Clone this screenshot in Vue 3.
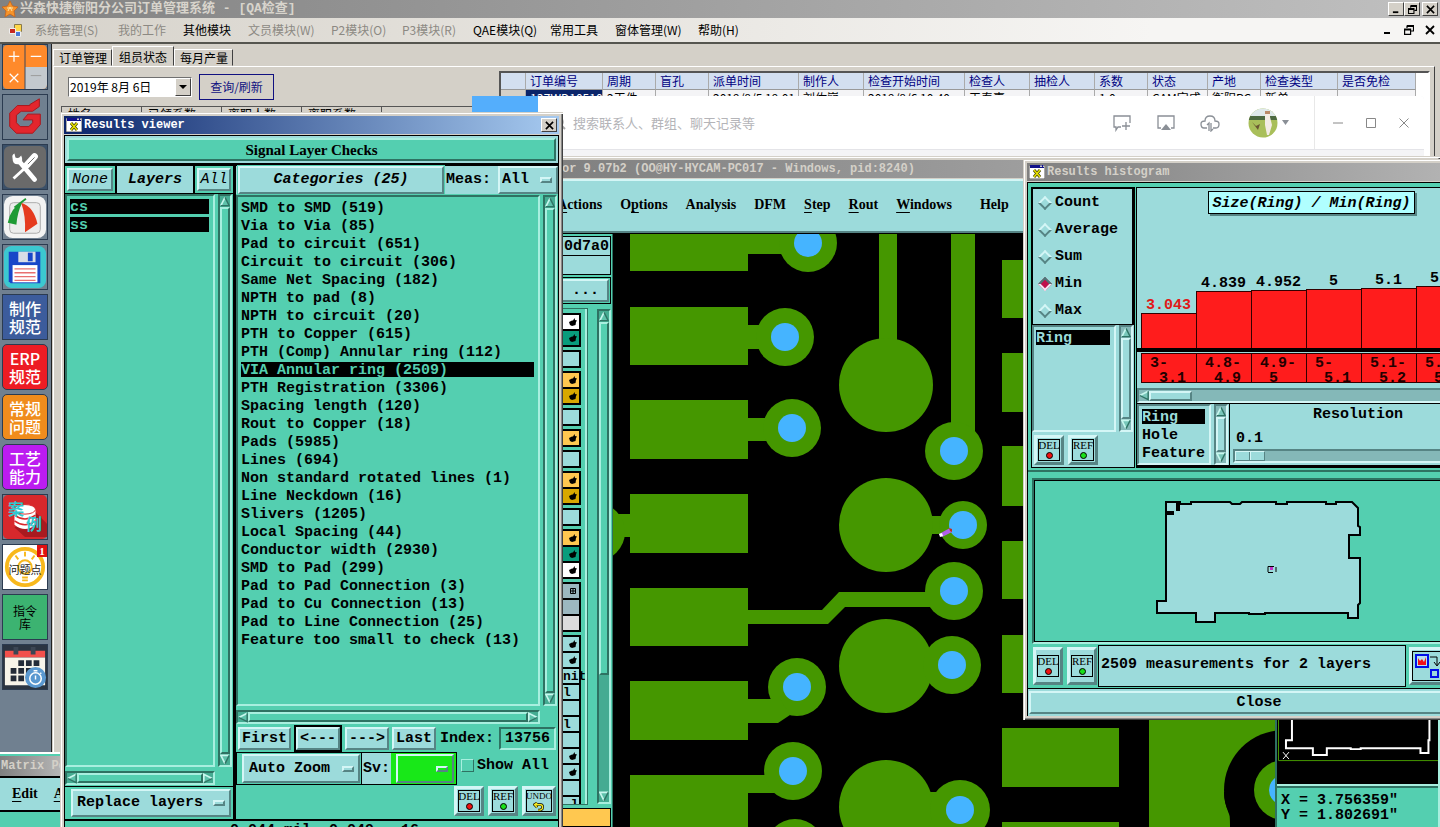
<script setup>
import { ref } from 'vue'

const menus = [
  { t: '系统管理(S)', off: true }, { t: '我的工作', off: true }, { t: '其他模块' },
  { t: '文员模块(W)', off: true }, { t: 'P2模块(O)', off: true }, { t: 'P3模块(R)', off: true },
  { t: 'QAE模块(Q)' }, { t: '常用工具' }, { t: '窗体管理(W)' }, { t: '帮助(H)' },
]
const cellWidth = (s) => [...s].reduce((w, c) => w + (c.charCodeAt(0) > 255 ? 12 : 6), 0) + 'px'

const orderCols = [
  { t: '', w: 25, v: '' }, { t: '订单编号', w: 77, v: '13ZWD10510' }, { t: '周期', w: 53, v: '2工件' },
  { t: '盲孔', w: 53, v: '' }, { t: '派单时间', w: 90, v: '2019/8/5 19:01' }, { t: '制作人', w: 65, v: '刘佐嶷' },
  { t: '检查开始时间', w: 101, v: '2019/8/6 10:40' }, { t: '检查人', w: 65, v: '王春喜' }, { t: '抽检人', w: 65, v: '' },
  { t: '系数', w: 53, v: '1.0' }, { t: '状态', w: 60, v: 'CAM完成' }, { t: '产地', w: 53, v: '衡阳PC' },
  { t: '检查类型', w: 77, v: '新单' }, { t: '是否免检', w: 78, v: '' },
]
const staffCols = ['姓名', '已领系数', '离职人数', '离职系数']

const categories = [
  'SMD to SMD (519)', 'Via to Via (85)', 'Pad to circuit (651)', 'Circuit to circuit (306)',
  'Same Net Spacing (182)', 'NPTH to pad (8)', 'NPTH to circuit (20)', 'PTH to Copper (615)',
  'PTH (Comp) Annular ring (112)', 'VIA Annular ring (2509)', 'PTH Registration (3306)',
  'Spacing length (120)', 'Rout to Copper (18)', 'Pads (5985)', 'Lines (694)',
  'Non standard rotated lines (1)', 'Line Neckdown (16)', 'Slivers (1205)', 'Local Spacing (44)',
  'Conductor width (2930)', 'SMD to Pad (299)', 'Pad to Pad Connection (3)',
  'Pad to Cu Connection (13)', 'Pad to Line Connection (25)', 'Feature too small to check (13)',
]
const selected = ref(9)
const index = ref('13756')
const showAll = ref(false)
const status = '0.044 mil  0.049   16'

const stats = ['Count', 'Average', 'Sum', 'Min', 'Max']
const stat = ref('Min')
const bars = [
  { v: '3.043', h: 35, a: '3-', b: '3.1', hot: true }, { v: '4.839', h: 57, a: '4.8-', b: '4.9' },
  { v: '4.952', h: 58, a: '4.9-', b: '5' }, { v: '5', h: 59, a: '5-', b: '5.1' },
  { v: '5.1', h: 60, a: '5.1-', b: '5.2' }, { v: '5.2', h: 62, a: '5.2-', b: '5.3' },
]
const resolution = ref(0)

const layerGroups = [
  [{ c: 'white', k: 1 }, { c: 'green', k: 1 }], [{ c: '' }], [{ c: 'orange', k: 1 }, { c: 'gold', k: 1 }], [{ c: '' }],
  [{ c: 'orange', k: 1 }], [{ c: '' }], [{ c: 'orange', k: 1 }, { c: 'gold', k: 1 }], [{ c: '' }],
  [{ c: 'orange', k: 1 }, { c: 'green', k: 1 }, { c: 'white', k: 1 }],
  [{ c: 'slate', k: 2 }, { c: 'slate' }, { c: 'pale' }],
  [{ c: '', k: 1 }, { c: '', k: 1 }, { c: '', t: 'nit' }, { c: '', t: 'l' }, { c: '' }, { c: '', t: 'l' }, { c: '' },
    { c: '', k: 1 }, { c: '', k: 1 }, { c: '' }, { c: '', t: ' l' }],
]

const pads = [
  [630, 234, 118, 37], [630, 307, 118, 58], [630, 400, 118, 59], [630, 494, 118, 59], [630, 588, 118, 58],
  [630, 681, 118, 59], [630, 775, 118, 52], [1002, 260, 60, 58], [1002, 353, 60, 59], [1002, 446, 60, 60],
  [1002, 541, 60, 58], [1002, 635, 60, 58], [1002, 728, 117, 59], [1002, 822, 117, 5],
  [748, 234, 50, 20], [748, 325, 20, 24], [748, 418, 22, 23], [748, 775, 30, 18], [613, 514, 17, 23],
  [879, 234, 18, 120], [951, 234, 24, 200], [928, 516, 20, 18], [925, 792, 20, 35],
]
const discs = [
  [886, 385, 47], [886, 525, 47], [886, 666, 47], [886, 807, 47], [808, 243, 29], [785, 337, 29], [792, 428, 29],
  [954, 451, 29], [963, 525, 24], [954, 591, 29], [952, 665, 29], [960, 810, 30], [797, 687, 29], [793, 771, 29],
  [795, 848, 29], [596, 532, 29],
]
const holes = [
  [808, 243], [785, 337], [792, 428], [954, 451], [963, 525], [954, 591], [952, 665], [960, 810], [797, 687], [793, 771],
]
</script>

<template>
  <div class="desktop">
    <svg class="defs" aria-hidden="true">
      <symbol id="up" viewBox="0 0 12 12"><path d="M6 1 L1 11 H11Z" fill="#6fd0bb" fill-opacity=".6" /><path d="M1 11 L6 1" stroke="#c8f7ee" stroke-width="2" fill="none" /><path d="M6 1 L11 11 H1" stroke="#2f7364" stroke-width="1.6" fill="none" /></symbol>
      <symbol id="down" viewBox="0 0 12 12"><path d="M1 1 H11 L6 11Z" fill="#6fd0bb" fill-opacity=".6" /><path d="M11 1 H1 L6 11" stroke="#c8f7ee" stroke-width="2" fill="none" /><path d="M11 1 L6 11" stroke="#2f7364" stroke-width="1.6" fill="none" /></symbol>
      <symbol id="left" viewBox="0 0 12 12"><path d="M1 6 L11 1 V11Z" fill="#6fd0bb" fill-opacity=".6" /><path d="M1 6 L11 1" stroke="#c8f7ee" stroke-width="2" fill="none" /><path d="M11 1 V11 L1 6" stroke="#2f7364" stroke-width="1.6" fill="none" /></symbol>
      <symbol id="right" viewBox="0 0 12 12"><path d="M11 6 L1 1 V11Z" fill="#6fd0bb" fill-opacity=".6" /><path d="M1 11 V1 L11 6" stroke="#c8f7ee" stroke-width="2" fill="none" /><path d="M11 6 L1 11" stroke="#2f7364" stroke-width="1.6" fill="none" /></symbol>
      <symbol id="xwin" viewBox="0 0 16 14"><path d="M0 0H16V14H0Z" fill="#fff" stroke="#555" /><path d="M1 0H15V3H1Z" fill="#10108a" /><path d="M11 0.500H13V2H11ZM14 .5H15V2H14Z" fill="#ccc" /><path d="M5 5 L11 12 M11 5 L5 12" stroke="#444400" stroke-width="3" /><path d="M5 5 L11 12 M11 5 L5 12" stroke="#e8e000" stroke-width="1.500" /></symbol>
      <symbol id="hand" viewBox="0 0 8 8"><path d="M0 4 L3 2.500 L4 2.500 L5.500 0 L6 2 L8 2.500 L7 4 L6.500 7 L3 8 L1 7Z" fill="#000" /></symbol>
      <symbol id="close" viewBox="0 0 10 10"><path d="M1 1 L9 9 M9 1 L1 9" stroke="#000" stroke-width="1.800" /></symbol>
      <symbol id="restore" viewBox="0 0 10 10"><path d="M3 .5 H9.500 V6 H7 M3 3 V.5 M3 1.500 H9.500" fill="none" stroke="#000" stroke-width="1.200" /><path d="M.6 4 H6.600 V9.400 H.6Z M.6 5 H6.600" fill="none" stroke="#000" stroke-width="1.200" /></symbol>
      <symbol id="min" viewBox="0 0 10 10"><path d="M1 8 H7" stroke="#000" stroke-width="2" /></symbol>
    </svg>

    <!-- Order management -->
    <section class="erp">
      <header class="erp-title">
        <svg class="star" viewBox="0 0 16 16"><path d="M8 0 L10.500 5 L16 6 L12 10 L13 16 L8 13 L3 16 L4 10 L0 6 L5.500 5Z" fill="#f7942a" stroke="#c9641a" stroke-width=".8" /><path d="M5 7 H11 M6 10 L8 6 L10 10" stroke="#fde3a4" fill="none" /></svg>
        <h1>兴森快捷衡阳分公司订单管理系统 - [QA检查]</h1>
        <button class="cap" aria-label="Minimize"><svg><use href="#min" /></svg></button>
        <button class="cap" aria-label="Restore"><svg><use href="#restore" /></svg></button>
        <button class="cap last" aria-label="Close"><svg><use href="#close" /></svg></button>
      </header>
      <nav class="erp-menu">
        <svg class="form-ico" viewBox="0 0 14 13"><path d="M5.500.500H12.500V7.500H5.500Z" fill="#ffd84a" stroke="#8a7a4a" /><path d="M.5 4.500H6.500V9.500H.5Z" fill="#c8281e" stroke="#eee" /><path d="M6.500 7.500H11.500V12.500H6.500Z" fill="#4a78d8" stroke="#eee" /></svg>
        <button v-for="m in menus" :key="m.t" :class="{ off: m.off }" :style="{ width: cellWidth(m.t) }">{{ m.t }}</button>
        <span class="grow"></span>
        <button class="mdi" aria-label="Minimize child"><svg><use href="#min" /></svg></button>
        <button class="mdi" aria-label="Restore child"><svg><use href="#restore" /></svg></button>
        <button class="mdi" aria-label="Close child"><svg><use href="#close" /></svg></button>
      </nav>
      <div class="erp-body">
        <aside class="side">
          <button class="tile calc" aria-label="Calculator"><svg viewBox="0 0 46 46"><path d="M0 5Q0 0 5 0H41Q46 0 46 5V41Q46 46 41 46H5Q0 46 0 41Z" fill="#ff8a2b" /><path d="M23 23H46V41Q46 46 41 46H23Z" fill="#c3c9ce" /><path d="M23 0V46" stroke="#34465c" /><path d="M6 12H17M11.500 6.500V17.500M29 12H40M7 30L16 39M16 30L7 39" stroke="#fff" stroke-width="1.300" /><path d="M29 32H40" stroke="#999" /></svg></button>
          <button class="tile flat" aria-label="Genesis"><svg viewBox="0 0 46 46"><path d="M28 10L38 4V12L31 17H19L14 21V29L18 33H27L31 29V26H21L26 20H39V31L31 40H14L7 33V19L15 11H28Z" fill="#e3262d" stroke="#a9161c" /></svg></button>
          <button class="tile dark" aria-label="Tools"><svg viewBox="0 0 46 46"><path d="M1 8Q1 1 8 1H38Q45 1 45 8V38Q45 45 38 45H8Q1 45 1 38Z" fill="#6a6a6a" /><path d="M16 16L33 36" stroke="#fff" stroke-width="5" stroke-linecap="round" /><path d="M10 14Q10 21 17 20Q22 17 19 11L16 14L13 13L12 9Q9 10 10 14Z" fill="#fff" /><path d="M11 35L23 24" stroke="#fff" stroke-width="3" /><path d="M25 21L33 12" stroke="#fff" stroke-width="7" stroke-linecap="round" /><path d="M26 20L33 13" stroke="#6a6a6a" /></svg></button>
          <button class="tile flat" aria-label="Umbrella"><svg viewBox="0 0 46 46"><rect x="1" y="1" width="44" height="44" rx="9" fill="#f3f3f3" /><rect x="7" y="8" width="32" height="32" rx="4" fill="#ececec" stroke="#aaa" /><path d="M20 8Q8 13 5 29L14 31Q15 18 20 8Z" fill="#1e9a34" /><path d="M19 8Q32 12 36 30L23 39Q24 22 19 8Z" fill="#e53a1e" /><path d="M12 13L24 4" stroke="#1e9a34" stroke-width="2" /></svg></button>
          <button class="tile flat" aria-label="Save"><svg viewBox="0 0 46 46"><rect x="1" y="1" width="44" height="44" rx="8" fill="#3cc8d0" /><path d="M6 7H39V40H8L6 38Z" fill="#1846c8" /><path d="M16 7H34V18H16Z" fill="#d8dde6" /><path d="M26 8H31V17H26Z" fill="#1846c8" /><path d="M10 21H36V39H10Z" fill="#fff" /><path d="M12 25H34M12 29H34M12 33H34M12 37H34" stroke="#e87070" stroke-width="1.400" /></svg></button>
          <button class="tile text blue">制作<br>规范</button>
          <button class="tile text red">ERP<br>规范</button>
          <button class="tile text amber">常规<br>问题</button>
          <button class="tile text violet">工艺<br>能力</button>
          <button class="tile case" aria-label="案例">
            <svg viewBox="0 0 46 46"><rect width="46" height="46" rx="5" fill="#d8282c" /><path d="M12 34L23 44H46V30L34 18Z" fill="#a81a20" /><path d="M12 15V31Q23 40 34 31V15Z" fill="#fff" /><ellipse cx="23" cy="15" rx="11" ry="5" fill="#fff" stroke="#d8282c" /><path d="M12 21Q23 29 34 21M12 27Q23 35 34 27" stroke="#d8282c" stroke-width="1.500" fill="none" /></svg>
            <span>案</span><span class="b">例</span>
          </button>
          <button class="tile bulb">
            <svg viewBox="0 0 46 46"><rect width="46" height="46" fill="#fff" /><circle cx="23" cy="23" r="19" fill="none" stroke="#f8b81c" stroke-width="4" /><path d="M23 7V12M13 11L16 15M33 11L30 15M20 34H26M20 37H26" stroke="#f8b81c" stroke-width="2" /><circle cx="23" cy="23" r="7" fill="none" stroke="#f8b81c" stroke-width="2" /></svg>
            <span>问题点</span><b>1</b>
          </button>
          <button class="tile lib">指令<br>库</button>
          <button class="tile flat" aria-label="Calendar"><svg viewBox="0 0 46 46"><rect width="46" height="46" fill="#2b3542" /><path d="M2 6H44V13H2Z" fill="#f2504c" /><path d="M2 13H44V42H2Z" fill="#f7f4ea" /><path d="M11 2H16V10H11ZM29 2H34V10H29Z" fill="#3b4654" /><path d="M16 16H22V22H16ZM24 16H30V22H24ZM32 16H38V22H32ZM8 24H14V30H8ZM16 24H22V30H16ZM24 24H30V30H24ZM8 32H14V38H8ZM16 32H22V38H16Z" fill="#232b38" /><circle cx="34" cy="34" r="11" fill="#5a98d0" /><circle cx="34" cy="35" r="6" fill="none" stroke="#fff" stroke-width="1.600" /><path d="M34 32V36M32 27H36M39 29L40 30" stroke="#fff" stroke-width="1.500" /></svg></button>
        </aside>
        <div class="erp-main">
          <div class="tabs" role="tablist">
            <button role="tab">订单管理</button><button role="tab" class="on">组员状态</button><button role="tab">每月产量</button>
          </div>
          <div class="page">
            <div class="filters">
              <div class="query">
                <span class="date"><input aria-label="日期" value="2019年 8月 6日"><button aria-label="打开日历"><svg viewBox="0 0 8 4"><path d="M0 0H8L4 4Z" /></svg></button></span>
                <button class="refresh">查询/刷新</button>
              </div>
              <div class="staff"><span v-for="c in staffCols" :key="c">{{ c }}</span></div>
            </div>
            <div class="orders">
              <table>
                <colgroup><col v-for="c in orderCols" :key="c.t" :style="{ width: c.w + 'px' }"></colgroup>
                <thead><tr><th v-for="c in orderCols" :key="c.t">{{ c.t }}</th></tr></thead>
                <tbody><tr><td v-for="(c, i) in orderCols" :key="c.t" :class="{ cur: i === 1, head: i === 0 }">{{ i ? c.v : '▸' }}</td></tr></tbody>
              </table>
            </div>
          </div>
        </div>
      </div>
    </section>

    <!-- Messenger -->
    <section class="im">
      <div class="im-bar">
        <span class="im-blue"></span>
        <svg class="lens" viewBox="0 0 14 14"><circle cx="6" cy="6" r="5" fill="none" stroke="#aaa" stroke-width="1.500" /><path d="M9.500 9.500L13 13" stroke="#aaa" stroke-width="2" /></svg>
        <input aria-label="搜索" placeholder="搜索联系人、群组、聊天记录等">
        <button class="im-ico" aria-label="New chat"><svg viewBox="0 0 20 18"><path d="M9 13H6L4 16V13H2V2H18V9" fill="none" stroke="#8a8f96" stroke-width="1.300" /><path d="M14 8V16M10 12H18" stroke="#8a8f96" stroke-width="1.300" /></svg></button>
        <button class="im-ico" aria-label="Share screen"><svg viewBox="0 0 20 18"><path d="M5 14H2V2H18V14H15" fill="none" stroke="#8a8f96" stroke-width="1.300" /><path d="M10 10L15 16H5Z" fill="#8a8f96" /></svg></button>
        <button class="im-ico" aria-label="Cloud"><svg viewBox="0 0 20 18"><path d="M7 14H4Q1 14 1 10Q1 7 5 7Q5 2 10 2Q15 2 15 7Q19 7 19 10Q19 14 16 14H13" fill="none" stroke="#8a8f96" stroke-width="1.300" /><path d="M9 17V9L7 11M11 9V17L13 15" fill="none" stroke="#8a8f96" stroke-width="1.300" /></svg></button>
        <button class="avatar" aria-label="Account"><svg viewBox="0 0 30 30"><clipPath id="av"><circle cx="15" cy="15" r="14.500" /></clipPath><g clip-path="url(#av)"><path d="M0 0H30V30H0Z" fill="#a9bf5a" /><path d="M0 0H30V8H0Z" fill="#dfe9ea" /><path d="M0 8H30V12H0Z" fill="#4d6a40" /><path d="M17 5H22V9L24 17L21 27H19L17 17Z" fill="#f3ece4" /><path d="M17 3H22V6H17Z" fill="#b98a68" /><path d="M4 14L8 18L12 16L10 22Z" fill="#6a5632" /></g></svg></button>
        <svg class="caret" viewBox="0 0 8 5"><path d="M0 0H7L3.500 5Z" fill="#8a8f96" /></svg>
        <div class="im-win">
          <button aria-label="Minimize"><svg viewBox="0 0 12 12"><path d="M1 6H11" stroke="#888" /></svg></button>
          <button aria-label="Maximize"><svg viewBox="0 0 12 12"><path d="M1.500 1.500H10.500V10.500H1.500Z" fill="none" stroke="#888" /></svg></button>
          <button aria-label="Close"><svg viewBox="0 0 12 12"><path d="M1.500 1.500L10.500 10.500M10.500 1.500L1.500 10.500" stroke="#888" /></svg></button>
        </div>
      </div>
    </section>

    <!-- Graphic editor -->
    <section class="win editor">
      <header class="bar idle"><h2>or 9.07b2 (OO@HY-HYCAM-PC017 - Windows, pid:8240)</h2></header>
      <nav class="motif-menu">
        <button><u>A</u>ctions</button><button>O<u>p</u>tions</button><button>Analysis</button><button>DFM</button>
        <button><u>S</u>tep</button><button><u>R</u>out</button><button><u>W</u>indows</button><button class="help">Help</button>
      </nav>
      <div class="editor-body">
        <div class="strip">
          <div class="field">0d7a0</div>
          <div class="field"></div>
          <div class="dots"><button class="bev">...</button></div>
          <div class="layers">
            <div class="layer-list">
              <div v-for="(g, i) in layerGroups" :key="i" class="group">
                <div v-for="(c, j) in g" :key="j" class="cell" :class="c.c">
                  <svg v-if="c.k === 1" viewBox="0 0 8 8"><use href="#hand" /></svg>
                  <svg v-else-if="c.k === 2" viewBox="0 0 8 8"><path d="M1.500 1.500H6.500V6.500H1.500ZM4 1.500V6.500M1.500 4H6.500" fill="none" stroke="#000" /></svg>
                  <span v-else>{{ c.t }}</span>
                </div>
              </div>
            </div>
            <div class="vs part"><svg><use href="#up" /></svg><i></i><s></s><svg><use href="#down" /></svg></div>
          </div>
          <div class="field foot"></div>
        </div>
        <svg class="board" viewBox="613 234 662 593" preserveAspectRatio="xMinYMin slice">
          <g fill="#459700">
            <rect v-for="(p, i) in pads" :key="i" :x="p[0]" :y="p[1]" :width="p[2]" :height="p[3]" />
            <circle v-for="(d, i) in discs" :key="i" :cx="d[0]" :cy="d[1]" :r="d[2]" />
            <path d="M748 610H822L839 592H935V607H845L828 624H748Z" />
            <path d="M748 699H780L790 715L778 723H748Z" />
            <path d="M1149 700H1275V827H1149Z" />
          </g>
          <path d="M1224 792Q1224 804 1229 812Q1231 820 1229 850H1284V792Z" fill="#000" />
          <circle cx="1284" cy="790" r="60" fill="#000" />
          <circle cx="1284" cy="790" r="30" fill="#459700" />
          <circle cx="1284" cy="790" r="15" fill="#45b4ff" />
          <circle v-for="(d, i) in holes" :key="i" :cx="d[0]" :cy="d[1]" r="14" fill="#45b4ff" />
          <path d="M939 534L950 528L952 532L942 537Z" fill="#b060e8" />
          <path d="M939 534L942 533L943 536L940 537Z" fill="#fff" />
          <path d="M949 528L952 529V532L950 531Z" fill="#c03020" />
        </svg>
        <div class="overview">
          <svg viewBox="0 0 162 552" preserveAspectRatio="xMinYMax slice">
            <rect width="162" height="552" fill="#000" />
            <path d="M1.500 300V528.500H162" stroke="#459700" fill="none" />
            <path d="M15 400V508H9V516H36V523H50V516H74V517H84V516H144V521H152V508H153V400" stroke="#fff" stroke-width="2" fill="none" />
            <path d="M6 520L12 527M12 520L6 527" stroke="#fff" />
          </svg>
          <p>X = 3.756359"<br>Y = 1.802691"</p>
        </div>
      </div>
    </section>

    <!-- Matrix -->
    <section class="win matrix">
      <header class="bar idle"><h2>Matrix Po</h2></header>
      <nav class="motif-menu"><button><u>E</u>dit</button><button><u>A</u>ctions</button></nav>
    </section>

    <!-- Results viewer -->
    <section class="win results">
      <header class="bar"><svg class="xw"><use href="#xwin" /></svg><h2>Results viewer</h2><button class="cap" aria-label="Close"><svg><use href="#close" /></svg></button></header>
      <div class="rv">
        <div class="banner"><button class="bev green">Signal Layer Checks</button></div>
        <div class="cols">
          <div class="col">
            <div class="lhead">
              <div class="gcell"><button class="bev it">None</button></div>
              <div class="ltitle">Layers</div>
              <div class="gcell"><button class="bev it">All</button></div>
            </div>
            <div class="scroller">
              <ul class="list dense"><li class="sel">cs</li><li class="sel">ss</li></ul>
              <div class="vs"><svg><use href="#up" /></svg><i></i><svg><use href="#down" /></svg></div>
              <div class="hs"><svg><use href="#left" /></svg><i></i><svg><use href="#right" /></svg></div>
            </div>
            <div class="replace"><span class="opt bev"><select aria-label="Layer mode"><option>Replace layers</option></select><i></i></span></div>
          </div>
          <div class="col">
            <div class="chead">
              <button class="bev cat">Categories (25)</button>
              <label for="meas">Meas:</label>
              <span class="opt bev"><select id="meas"><option>All</option></select><i></i></span>
            </div>
            <div class="scroller">
              <ul class="list">
                <li v-for="(c, i) in categories" :key="c" :class="{ sel: i === selected }" @click="selected = i">{{ c }}</li>
              </ul>
              <div class="vs"><svg><use href="#up" /></svg><i></i><svg><use href="#down" /></svg></div>
              <div class="hs"><svg><use href="#left" /></svg><i></i><svg><use href="#right" /></svg></div>
            </div>
            <div class="navrow">
              <button class="bev">First</button><button class="bev prev">&lt;---</button><button class="bev">---&gt;</button><button class="bev">Last</button>
              <label for="idx">Index:</label><input id="idx" v-model="index">
            </div>
            <div class="zoomrow">
              <div class="zoombox">
                <span class="opt bev"><select aria-label="Zoom mode"><option>Auto Zoom</option></select><i></i></span>
                <label for="sv">Sv:</label>
                <div class="svcell"><span class="opt bev lime"><select id="sv"><option></option></select><i></i></span></div>
              </div>
              <label class="chk"><input v-model="showAll" type="checkbox">Show All</label>
            </div>
            <div class="acts">
              <button class="bev act"><span>DEL<em class="r"></em></span></button>
              <button class="bev act"><span>REF<em></em></span></button>
              <button class="bev act wide"><span>UNDO<svg viewBox="0 0 12 10"><path d="M4 1L1 3L4 6M1 3H8Q10 3 10 6Q10 9 5 9" fill="none" stroke="#000" stroke-width="3" /><path d="M4 1L1 3L4 6M1 3H8Q10 3 10 6Q10 9 5 9" fill="none" stroke="#f4e820" stroke-width="1.500" /></svg></span></button>
            </div>
          </div>
        </div>
        <p class="status">{{ status }}</p>
      </div>
    </section>

    <!-- Results histogram -->
    <section class="win histo">
      <header class="bar idle"><svg class="xw"><use href="#xwin" /></svg><h2>Results histogram</h2></header>
      <div class="hw">
        <div class="htop">
          <div class="hleft">
            <div class="radios">
              <label v-for="s in stats" :key="s"><input v-model="stat" type="radio" name="stat" :value="s">{{ s }}</label>
            </div>
            <div class="scroller aqua">
              <ul class="list dense"><li class="sel">Ring</li></ul>
              <div class="vs"><svg><use href="#up" /></svg><i></i><svg><use href="#down" /></svg></div>
            </div>
            <div class="acts">
              <button class="bev act"><span>DEL<em class="r"></em></span></button>
              <button class="bev act"><span>REF<em></em></span></button>
            </div>
          </div>
          <div class="hright">
            <div class="chart">
              <h3>Size(Ring) / Min(Ring)</h3>
              <div class="bars">
                <div v-for="b in bars" :key="b.v" class="bcol" :class="{ hot: b.hot }"><span>{{ b.v }}</span><div :style="{ height: b.h + 'px' }"></div></div>
              </div>
              <div class="bins"><div v-for="b in bars" :key="b.v">{{ b.a }}<br><span>{{ b.b }}</span></div></div>
            </div>
            <div class="hs aqua short"><svg><use href="#left" /></svg><i></i><s></s></div>
            <div class="hlow">
              <div class="scroller aqua">
                <ul class="list"><li class="sel">Ring</li><li>Hole</li><li>Feature</li></ul>
                <div class="vs"><svg><use href="#up" /></svg><i></i><svg><use href="#down" /></svg></div>
              </div>
              <div class="reso">
                <label for="reso">Resolution</label>
                <output for="reso">0.1</output>
                <input id="reso" v-model="resolution" type="range" min="0" max="100">
              </div>
            </div>
          </div>
        </div>
        <div class="map">
          <svg viewBox="1035 480 440 160" preserveAspectRatio="xMinYMin slice">
            <path d="M1166 501H1180V503H1191V501H1230L1232 503H1240L1242 501H1276V503H1287V501H1326V503H1336V501H1352L1358 507V525L1360 526V534H1349V557H1360V602L1358 604V617H1348V612H1265V613H1249V612H1215V621H1196V612H1157V600H1166Z" fill="#9cdbdb" stroke="#000" stroke-width="2" />
            <path d="M1176 501H1180V510H1176ZM1167 510H1174V514H1167Z" />
            <path d="M1268 571V565.500H1274M1276 566V571M1268 571.500H1273" stroke="#000" fill="none" />
            <rect x="1270" y="566" width="3" height="3" fill="#c030c8" />
          </svg>
        </div>
        <div class="hbar">
          <button class="bev act"><span>DEL<em class="r"></em></span></button>
          <button class="bev act"><span>REF<em></em></span></button>
          <p>2509 measurements for 2 layers</p>
          <button class="bev act pic" aria-label="Snapshot"><svg viewBox="0 0 32 30"><rect x=".5" y=".5" width="31" height="29" fill="none" stroke="#000" /><rect x="4" y="4" width="12" height="12" fill="#b8e0f0" stroke="#0010e8" stroke-width="2" /><path d="M6 14V7L8 10L10 8L12 11L14 6V14Z" fill="#f01018" /><path d="M18 6H25V14M22 11L25 15L28 11" fill="none" stroke="#000" /><rect x="19" y="19" width="7" height="7" fill="none" stroke="#0010e8" stroke-width="2" /></svg></button>
        </div>
        <div class="closer"><button class="bev">Close</button></div>
      </div>
    </section>
  </div>
</template>

<style>
body { background: #d4d0c8; }
</style>

<style scoped>
.desktop {
  --t: #54cfb0; --td: #2e7262; --tl: #a8efdf;
  --a: #9cdbdb; --ad: #568484; --al: #d4f6f6;
  --mono: "Liberation Mono", monospace;
  --serif: "Liberation Serif", serif;
  --cjk: "Noto Sans CJK SC", sans-serif;
  position: relative; height: 100vh; overflow: hidden; background: #d4d0c8;
  font: bold 15px/18px var(--mono); color: #000;
}
.desktop * { box-sizing: border-box; }
.defs { position: absolute; width: 0; height: 0; }
button, input, select { font: inherit; color: inherit; padding: 0; margin: 0; border: 0; background: none; border-radius: 0; outline: 0; }
button { white-space: nowrap; }
select { appearance: none; }
h1, h2, h3, p, ul { margin: 0; padding: 0; font: inherit; list-style: none; }
svg { display: block; }

/* order management */
.erp { position: absolute; inset: 0; display: flex; flex-direction: column; font: 12px/16px var(--cjk); }
.erp-title { display: flex; align-items: center; height: 18px; padding: 0 2px; background: linear-gradient(90deg, #828282, #c0c0c0); color: #d8d4cc; font: bold 13px/18px "Liberation Mono", "Noto Sans CJK SC", monospace; }
.star { width: 16px; height: 16px; margin-right: 2px; }
.erp-title h1 { flex: 1; white-space: nowrap; }
.cap { display: grid; place-items: center; width: 16px; height: 14px; background: #d4d0c8; border: 1px solid; border-color: #fff #404040 #404040 #fff; }
.cap.last { margin-left: 2px; }
.cap svg { width: 9px; height: 9px; }
.erp-menu { display: flex; align-items: center; gap: 17px; height: 26px; padding: 0 5px 0 9px; background: linear-gradient(90deg, #d6d2ca, #f6f5f3 80%); border-bottom: 2px solid #55554f; }
.form-ico { width: 14px; height: 13px; margin-right: -5px; }
.off { color: #8c8983; }
.grow { flex: 1; }
.erp-menu button { text-align: left; }
.erp-menu .mdi { width: 10px; margin-left: -6px; margin-right: 0; }
.mdi svg { width: 10px; height: 10px; }
.erp-body { flex: 1; display: flex; min-height: 0; }
.side { width: 52px; padding: 0 2px; display: flex; flex-direction: column; gap: 4px; background: #708090; border-right: 1px solid #222; }
.tile { position: relative; flex: none; width: 46px; height: 46px; border: 1px solid #2b3b50; overflow: hidden; }
.tile svg { width: 44px; height: 44px; }
.calc { background: #708090; }
.dark { background: #3b5068; }
.text { color: #fff; font: 500 16px/18px var(--cjk); border-radius: 5px; }
.blue { background: #3c5c9c; border-radius: 0; }
.red { background: #ed1c24; }
.amber { background: #f08c1c; }
.violet { background: #bc1cf0; }
.case span { position: absolute; left: 5px; top: 4px; font: bold 16px/18px var(--cjk); color: #30c8d0; }
.case span.b { left: 23px; top: 19px; }
.bulb span { position: absolute; left: 0; right: 0; top: 16px; font: 11px/16px var(--cjk); color: #222; }
.bulb b { position: absolute; right: 0; top: 0; width: 10px; height: 12px; background: #e01010; color: #fff; font: bold 11px/12px var(--serif); }
.lib { background: #3cb371; font: 12px/13px var(--cjk); }
.erp-main { flex: 1; min-width: 0; display: flex; flex-direction: column; padding: 2px 5px 0 1px; background: #d4d0c8; }
.tabs { display: flex; align-items: flex-end; height: 20px; }
.tabs button { height: 17px; padding: 0 4px 0 5px; border: 1px solid; border-color: #fff #404040 transparent #fff; line-height: 15px; }
.tabs .on { height: 20px; padding: 0 6px; }
.page { flex: 1; display: flex; border: 1px solid; border-color: #fff #404040 #404040 #fff; }
.filters { width: 445px; padding: 7px 0 0 7px; }
.query { display: flex; align-items: center; gap: 7px; padding-left: 7px; }
.date { display: flex; width: 124px; height: 20px; background: #fff; border: 1px solid; border-color: #707070 #fff #fff #707070; }
.date input { flex: 1; min-width: 0; padding-left: 1px; font-size: 12px; }
.date button { width: 16px; background: #d4d0c8; border: 1px solid; border-color: #fff #404040 #404040 #fff; display: grid; place-items: center; }
.date svg { width: 8px; height: 4px; }
.refresh { width: 75px; height: 26px; border: 1px solid #101080; color: #101080; }
.staff { display: flex; margin-top: 6px; border: 1px solid #555; border-right: 0; }
.staff span { width: 80px; padding-left: 6px; line-height: 14px; border-right: 1px solid #555; }
.orders { flex: 1; margin-top: 4px; margin-right: 4px; border: 2px solid #555; border-right-color: #fff; background: #fff; }
table { border-collapse: separate; border-spacing: 0; table-layout: fixed; width: 915px; font: inherit; }
th, td { height: 17px; padding: 0 0 0 4px; line-height: 16px; text-align: left; white-space: nowrap; overflow: hidden; border-right: 1px solid #aaa; border-bottom: 1px solid #999; font-weight: normal; font-size: 12px; }
th { background: #d3dff0; color: #000080; }
td { background: #f4f4f6; line-height: 14px; }
td.cur { background: #0a246a; color: #fff; }
td.head { background: #d4d0c8; }

/* messenger */
.im { position: absolute; left: 472px; right: 16px; top: 96px; height: 66px; background: #f4f4f6; border-radius: 0 4px 0 0; }
.im-bar { display: flex; align-items: center; height: 54px; background: #fff; border-bottom: 1px solid #e4e4e8; border-radius: 0 4px 0 0; }
.im-blue { align-self: stretch; width: 66px; background: #54aefc; }
.lens { width: 14px; height: 14px; margin: 0 7px 0 14px; }
.im input { flex: 1; font: 13px/20px var(--cjk); }
.im input::placeholder { color: #b4b4b8; opacity: 1; }
.im-ico { width: 20px; margin-right: 24px; }
.im-ico svg { width: 20px; height: 18px; }
.avatar { width: 30px; margin-left: 4px; }
.avatar svg { width: 30px; height: 30px; }
.caret { width: 8px; height: 5px; margin: 0 24px 0 4px; }
.im-win { display: flex; align-items: center; gap: 21px; align-self: stretch; padding: 0 14px 0 17px; border-left: 1px solid #e8e8e8; }
.im-win svg { width: 12px; height: 12px; }

/* shared window chrome */
.win { position: absolute; display: flex; flex-direction: column; padding: 4px; background: #d4d0c8; box-shadow: inset 1px 1px 0 #d4d0c8, inset 2px 2px 0 #fff, inset -1px -1px 0 #404040, inset -2px -2px 0 #888; }
.bar { display: flex; align-items: center; flex: none; height: 18px; padding: 0 2px; background: linear-gradient(90deg, #0a246a, #a6caf0); color: #fff; font: bold 12px/18px var(--mono); }
.bar.idle { background: linear-gradient(90deg, #808080, #b8b8b8); color: #d4d0c8; }
.bar h2 { flex: 1; white-space: nowrap; }
.xw { width: 16px; height: 14px; margin-right: 2px; }
.motif-menu { display: flex; align-items: center; gap: 18px; background: var(--a); font: bold 14px/18px var(--serif); border-top: 2px solid var(--al); border-bottom: 2px solid var(--ad); }
u { text-underline-offset: 3px; }
.bev { border: 2px solid; border-color: var(--al) var(--ad) var(--ad) var(--al); background: var(--a); }
.bev.green { background: var(--t); border-color: var(--tl) var(--td) var(--td) var(--tl); }
.opt { display: flex; align-items: center; position: relative; }
.opt select { flex: 1; min-width: 0; }
.opt i { position: absolute; right: 4px; width: 12px; height: 6px; border: 2px solid; border-color: var(--al) var(--ad) var(--ad) var(--al); pointer-events: none; }
.list { border: 2px solid; border-color: var(--td) var(--tl) var(--tl) var(--td); padding: 2px 4px 0 3px; overflow: hidden; white-space: nowrap; font-size: 15px; }
.list li { height: 18px; line-height: 19px; }
.list .sel { height: 15px; margin: 1px 0 2px; line-height: 17px; background: #000; color: var(--t); }
.aqua .sel { color: var(--a); }
.vs, .hs { display: flex; align-items: center; border: 2px solid; border-color: var(--td) var(--tl) var(--tl) var(--td); background: #45ab92; }
.vs { flex-direction: column; width: 14px; }
.hs { height: 14px; }
.vs svg, .hs svg { flex: none; width: 10px; height: 11px; }
.vs i, .hs i { flex: 1; background: var(--t); border: 2px solid; border-color: var(--tl) var(--td) var(--td) var(--tl); }
.vs i { width: 10px; }
.hs i { height: 10px; }
.scroller { display: grid; grid-template: minmax(0, 1fr) 14px / minmax(0, 1fr) 14px; gap: 4px 3px; flex: 1; min-height: 0; padding: 0 1px 0 0; }
.aqua .list, .aqua .vs, .hs.aqua { border-color: var(--ad) var(--al) var(--al) var(--ad); }
.aqua .vs, .hs.aqua { background: #84b8b8; }
.aqua .vs i, .hs.aqua i { background: var(--a); border-color: var(--al) var(--ad) var(--ad) var(--al); }
.scroller.aqua { grid-template-rows: minmax(0, 1fr); }

/* small picture buttons */
.act { display: grid; place-items: center; width: 30px; height: 30px; flex: none; border-width: 3px; }
.act span { display: flex; flex-direction: column; align-items: center; width: 22px; height: 22px; border: 1px solid #000; font: 11px/11px var(--serif); }
.act em { width: 7px; height: 7px; margin-top: 1px; border: 1px solid #000; border-radius: 50%; background: #18e018; }
.act em.r { background: #f01010; }
.act.wide { width: 34px; }
.act.wide span { width: 26px; font-size: 9px; }
.act.wide svg { width: 12px; height: 10px; }

/* editor */
.editor { left: 550px; right: 0; top: 156px; bottom: 0; padding: 4px 0 0 4px; }
.editor .bar { padding-left: 8px; }
.editor .motif-menu { flex: none; height: 54px; margin-top: 1px; padding: 0 0 2px 3px; }
.motif-menu .help { margin-left: 10px; }
.editor-body { flex: 1; min-height: 0; display: flex; border-top: 1px solid #000; background: #000; }
.strip { flex: none; width: 59px; display: flex; flex-direction: column; padding: 2px 1px 0 0; background: var(--t); border-right: 1px solid #2e7262; }
.field { height: 20px; padding-left: 9px; line-height: 19px; background: var(--a); border: 1px solid #000; }
.field + .field { margin-top: -1px; }
.dots { display: flex; height: 27px; margin-top: 2px; padding: 1px; border: 1px solid #000; }
.dots .bev { flex: 1; padding-left: 6px; }
.layers { flex: 1; min-height: 0; display: flex; justify-content: space-between; margin-top: 5px; }
.layer-list { display: flex; flex-direction: column; gap: 3px; width: 33px; padding: 4px 4px 0 0; border-right: 2px solid var(--tl); outline: 1px solid var(--td); overflow: hidden; }
.group { border-bottom: 2px solid #000; border-right: 2px solid #000; background: #000; }
.cell { display: flex; align-items: center; height: 16px; padding-right: 2px; border-top: 2px solid #000; background: var(--a); white-space: pre; font-size: 13px; }
.cell span { flex: none; padding-left: 9px; line-height: 13px; }
.cell svg { width: 8px; height: 8px; margin-left: auto; }
.white { background: #fff; } .green { background: #089c7c; } .orange { background: #ffc850; }
.gold { background: #d8a800; } .slate { background: #9cb8c0; } .pale { background: #dcdcdc; }
.part i { flex: 360; }
.part s { flex: 120; }
.foot { height: 19px; margin-top: 4px; background: #ffc850; }
.board { flex: 1; min-width: 0; height: 100%; background: #000; }
.overview { flex: none; width: 165px; display: flex; flex-direction: column; background: var(--t); border-left: 2px solid var(--td); border-right: 2px solid var(--tl); }
.overview svg { flex: 1; min-height: 0; width: 100%; border-bottom: 2px solid var(--tl); }
.overview p { flex: none; height: 41px; padding: 5px 0 0 4px; border-top: 2px solid var(--td); line-height: 15px; }

/* matrix */
.matrix { left: -4px; top: 752px; bottom: -20px; width: 68px; padding: 4px 0 4px 4px; background: var(--t); box-shadow: inset 0 2px 0 #fff; }
.matrix .bar { height: 20px; padding-left: 1px; }
.matrix .motif-menu { height: 36px; padding-left: 12px; gap: 16px; border-top: 2px solid #000; border-bottom-color: #000; }

/* results viewer */
.results { left: 60px; top: 112px; bottom: -16px; width: 503px; }
.rv { flex: 1; min-height: 0; display: flex; flex-direction: column; margin-top: 1px; border-left: 1px solid #000; border-top: 1px solid #000; border-right: 1px solid #000; background: var(--t); }
.banner { display: flex; height: 27px; padding: 2px; background: var(--a); }
.banner .bev { flex: 1; font: bold 15px/18px var(--serif); }
.cols { flex: 1; min-height: 0; display: grid; grid-template-columns: 168px minmax(0, 1fr); gap: 3px; border-top: 3px solid #000; border-bottom: 2px solid #000; background: #000; }
.col { display: flex; flex-direction: column; min-height: 0; background: var(--t); }
.lhead { display: grid; grid-template-columns: 50px 1fr 38px; gap: 2px; height: 28px; border-bottom: 1px solid #000; background: #000; }
.gcell { display: flex; padding: 2px; background: var(--t); }
.gcell .bev { flex: 1; }
.it { font-weight: normal; font-style: italic; }
.ltitle { display: grid; place-items: center; background: var(--a); font-style: italic; }
.dense { padding-top: 3px; }
.dense .sel { margin-bottom: 3px; margin-top: 0; }
.replace { height: 33px; padding: 2px 2px 2px 6px; border-top: 1px solid #000; margin-top: 1px; display: flex; }
.replace .opt { flex: 1; padding-left: 4px; }
.chead { display: flex; height: 28px; margin-bottom: 1px; background: var(--a); line-height: 24px; }
.cat { width: 206px; margin: 0 2px; font-style: italic; outline: 1px solid var(--t); }
.chead label { flex: 1; line-height: 28px; }
.chead .opt { width: 60px; padding-left: 2px; }
.navrow { display: flex; align-items: center; height: 27px; padding: 0 2px; gap: 3px; margin-top: 1px; }
.navrow .bev { height: 23px; padding: 0 2px; line-height: 18px; }
.navrow .prev { outline: 2px solid #000; margin: 0 2px; }
.navrow label { margin-left: 1px; }
.navrow input { flex: 1; min-width: 0; height: 23px; margin-left: 2px; padding-left: 4px; border: 2px solid; border-color: var(--td) var(--tl) var(--tl) var(--td); }
.zoomrow { display: flex; align-items: center; height: 33px; }
.zoombox { display: flex; width: 221px; height: 33px; border: 1px solid #000; }
.zoombox > .opt { width: 118px; margin: 1px 1px 1px 5px; padding-left: 5px; }
.zoombox > label { padding: 0 1px; line-height: 31px; border-left: 1px solid #000; background: var(--a); }
.svcell { flex: 1; display: flex; padding: 1px 2px 1px 5px; background: #18e818; }
.svcell .opt { flex: 1; background: #18e818; }
.chk { display: flex; align-items: center; gap: 3px; margin: -6px 0 0 4px; }
.chk input { appearance: none; width: 13px; height: 13px; border: 1px solid; border-color: var(--tl) var(--td) var(--td) var(--tl); }
.acts { display: flex; gap: 4px; padding: 1px 2px; }
.col .acts { justify-content: flex-end; height: 34px; }
.status { height: 18px; padding-left: 165px; line-height: 20px; white-space: pre; }

/* histogram */
.histo { left: 1023px; right: -55px; top: 159px; }
.hw { display: flex; flex-direction: column; margin-top: 1px; border: 1px solid #000; border-bottom: 0; background: var(--t); }
.htop { display: grid; grid-template-columns: 104px minmax(0, 1fr); gap: 1px; height: 289px; padding: 4px 3px 2px; border-bottom: 2px solid var(--td); }
.hleft { display: flex; flex-direction: column; background: var(--a); border-right: 1px solid #000; border-bottom: 1px solid #000; border-left: 1px solid #000; }
.radios { display: flex; flex-direction: column; height: 138px; padding: 0 5px; border: 2px solid #000; border-left-width: 1px; border-bottom-width: 1px; }
.radios label { display: flex; align-items: center; gap: 3px; height: 27px; line-height: 17px; }
.radios input { appearance: none; flex: none; width: 10px; height: 10px; margin: 0 2px; transform: rotate(45deg); border: 2px solid; border-color: var(--al) var(--ad) var(--ad) var(--al); }
.radios input:checked { background: #c0104c; border-color: #4c7878 #f0e8f4 #f0e8f4 #4c7878; }
.hleft .scroller { flex: 1; }
.hleft .list { padding-left: 2px; }
.hleft .acts { padding: 3px 2px 2px; }
.hright { display: flex; flex-direction: column; min-height: 0; background: var(--a); border: 1px solid #000; border-bottom-width: 3px; }
.chart { flex: 1; display: flex; flex-direction: column; padding-left: 4px; overflow: hidden; }
.chart h3 { align-self: center; margin: 3px 4px 0 0; height: 23px; padding: 0 3px; line-height: 23px; background: #b0ffff; border: 1px solid #000; box-shadow: 2px 2px 0 #568484; font-style: italic; }
.bars { flex: 1; display: flex; align-items: flex-end; margin-left: -4px; padding-left: 4px; border-bottom: 4px solid #000; }
.bcol { width: 55px; flex: none; text-align: center; font-size: 15px; line-height: 15px; }
.bcol.hot span { color: #e01818; }
.bcol div, .bins div { background: #ff1c1c; border: 1px solid #300; margin-right: -1px; }
.bcol div { border-bottom: 0; }
.bins { display: flex; height: 30px; margin: 1px 0 5px; }
.bins div { width: 56px; flex: none; padding: 2px 0 0 8px; line-height: 15px; color: #200; }
.bins span { padding-left: 9px; }
.hs.short { flex: none; height: 15px; }
.short i { flex: none; width: 43px; }
.hlow { flex: none; display: grid; grid-template-columns: 93px 1fr; height: 62px; border-top: 1px solid #000; }
.hlow .scroller { border-right: 1px solid #000; min-width: 0; }
.reso { display: flex; flex-direction: column; padding: 0 3px; }
.reso label { text-align: center; line-height: 22px; }
.reso output { padding: 3px 0 0 3px; line-height: 20px; }
.reso input { appearance: none; width: 100%; height: 14px; background: #84b8b8; border: 2px solid; border-color: var(--ad) var(--al) var(--al) var(--ad); }
.reso input::-webkit-slider-thumb { appearance: none; width: 30px; height: 10px; border: 1px solid; border-color: var(--al) var(--ad) var(--ad) var(--al); background: linear-gradient(90deg, var(--a) 13px, var(--ad) 13px 14px, var(--al) 14px 15px, var(--a) 15px); }
.map { height: 166px; margin: 6px 3px 0 4px; border: 2px solid; border-color: var(--td) var(--tl) var(--tl) var(--td); overflow: hidden; }
.map svg { width: 442px; height: 162px; border: 1px solid #000; }
.hbar { display: flex; align-items: center; gap: 4px; height: 45px; padding: 0 3px 1px 5px; border-bottom: 1px solid #000; }
.hbar .act { height: 38px; }
.hbar p { width: 308px; height: 42px; margin: 0 -1px 0 -3px; padding-left: 2px; line-height: 38px; border: 1px solid #000; background: var(--a); }
.hbar .pic { width: 38px; }
.pic svg { width: 32px; height: 30px; }
.closer { display: flex; padding: 2px 1px 2px; background: var(--a); }
.closer .bev { flex: 1; height: 23px; line-height: 18px; }
</style>
